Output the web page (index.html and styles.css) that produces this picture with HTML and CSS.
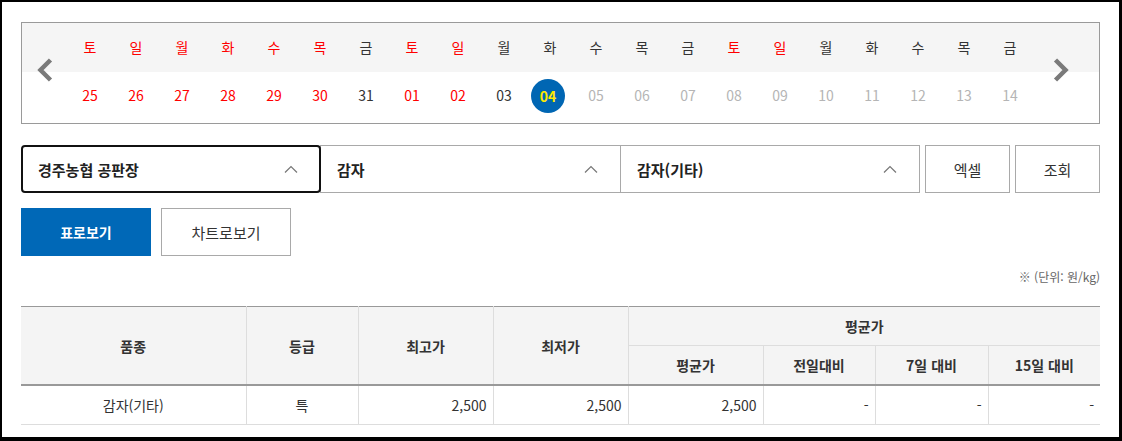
FILE: index.html
```html
<!DOCTYPE html>
<html lang="ko">
<head>
    <meta charset="UTF-8">
    <meta name="viewport" content="width=device-width, initial-scale=1.0">
    <title>공판장 경락가격</title>
    <link rel="stylesheet" href="styles.css">
</head>
<body>

<div class="page">

    <div class="calendar">
        <button class="cal-arrow cal-prev" type="button">
            <svg width="16" height="24" viewBox="0 0 16 24"><polyline points="13.5,2 3.5,12 13.5,22"/></svg>
        </button>

        <ul class="cal-row cal-week">
            <li class="red">토</li><li class="red">일</li><li class="red">월</li><li class="red">화</li>
            <li class="red">수</li><li class="red">목</li><li>금</li><li class="red">토</li>
            <li class="red">일</li><li>월</li><li>화</li><li>수</li><li>목</li><li>금</li>
            <li class="red">토</li><li class="red">일</li><li>월</li><li>화</li><li>수</li><li>목</li><li>금</li>
        </ul>

        <ul class="cal-row cal-dates">
            <li class="red">25</li><li class="red">26</li><li class="red">27</li><li class="red">28</li>
            <li class="red">29</li><li class="red">30</li><li>31</li><li class="red">01</li>
            <li class="red">02</li><li>03</li><li class="on"><span>04</span></li>
            <li class="off">05</li><li class="off">06</li><li class="off">07</li><li class="off">08</li>
            <li class="off">09</li><li class="off">10</li><li class="off">11</li><li class="off">12</li>
            <li class="off">13</li><li class="off">14</li>
        </ul>

        <button class="cal-arrow cal-next" type="button">
            <svg width="16" height="24" viewBox="0 0 16 24"><polyline points="2.5,2 12.5,12 2.5,22"/></svg>
        </button>
    </div>

    <div class="search">
        <div class="select active">
            <span>경주농협 공판장</span>
            <svg width="14" height="8" viewBox="0 0 14 8"><polyline points="1,7.5 7,1.5 13,7.5"/></svg>
        </div>
        <div class="select">
            <span>감자</span>
            <svg width="14" height="8" viewBox="0 0 14 8"><polyline points="1,7.5 7,1.5 13,7.5"/></svg>
        </div>
        <div class="select">
            <span>감자(기타)</span>
            <svg width="14" height="8" viewBox="0 0 14 8"><polyline points="1,7.5 7,1.5 13,7.5"/></svg>
        </div>
        <button class="btn" type="button">엑셀</button>
        <button class="btn" type="button">조회</button>
    </div>

    <div class="view-tabs">
        <button class="tab on" type="button">표로보기</button>
        <button class="tab" type="button">차트로보기</button>
    </div>

    <p class="unit">※ (단위: 원/kg)</p>

    <table class="price">
        <colgroup>
            <col style="width:225px"><col style="width:112px"><col style="width:135px"><col style="width:135px">
            <col style="width:135px"><col style="width:112px"><col style="width:113px"><col style="width:112px">
        </colgroup>
        <thead>
            <tr>
                <th rowspan="2">품종</th>
                <th rowspan="2">등급</th>
                <th rowspan="2">최고가</th>
                <th rowspan="2">최저가</th>
                <th colspan="4">평균가</th>
            </tr>
            <tr>
                <th>평균가</th>
                <th>전일대비</th>
                <th>7일 대비</th>
                <th>15일 대비</th>
            </tr>
        </thead>
        <tbody>
            <tr>
                <td class="center">감자(기타)</td>
                <td class="center">특</td>
                <td>2,500</td>
                <td>2,500</td>
                <td>2,500</td>
                <td>-</td>
                <td>-</td>
                <td>-</td>
            </tr>
        </tbody>
    </table>

</div>

</body>
</html>
```

FILE: styles.css
```css
html {
    background: #000;
}

body {
    margin: 2px 3px 4px 2px;
    height: 435px;
    overflow: hidden;
    background: #fff;
    font-family: "Noto Sans CJK KR", "Noto Sans", sans-serif;
    color: #333;
}

.page {
    padding: 20px 19px 0 19px;
}

ul {
    margin: 0;
    padding: 0;
    list-style: none;
}

button {
    font-family: inherit;
    cursor: pointer;
}

/* 날짜 슬라이더 */
.calendar {
    position: relative;
    border: 1px solid #9a9a9a;
}

.cal-row {
    display: grid;
    grid-template-columns: repeat(21, 46px);
    padding: 0 66px 0 45px;
}

.cal-row li {
    text-align: center;
    font-size: 14px;
    color: #333;
}

.cal-week {
    height: 49px;
    background: #f5f5f5;
    line-height: 48px;
}

.cal-dates {
    height: 51px;
    line-height: 47px;
}

.cal-row li.red {
    color: #ff0000;
}

.cal-row li.off {
    color: #b5b5b5;
}

.cal-dates li.on {
    display: flex;
    justify-content: center;
    align-items: center;
}

.cal-dates li.on span {
    width: 34px;
    height: 34px;
    margin-top: -4px;
    margin-left: -4px;
    border-radius: 50%;
    background: #0066b3;
    color: #ffea00;
    font-weight: bold;
    line-height: 34px;
}

.cal-arrow {
    position: absolute;
    top: 35px;
    padding: 0;
    border: 0;
    background: none;
    line-height: 0;
}

.cal-arrow svg polyline {
    fill: none;
    stroke: #7a7a7a;
    stroke-width: 4.5;
}

.cal-prev {
    left: 15px;
}

.cal-next {
    right: 30px;
}

/* 검색 */
.search {
    display: flex;
    margin-top: 21px;
    height: 48px;
}

.select {
    display: flex;
    align-items: center;
    justify-content: space-between;
    box-sizing: border-box;
    width: 301px;
    margin-left: -1px;
    padding: 0 22px 0 16px;
    border: 1px solid #a9a9a9;
    font-size: 15px;
    font-weight: bold;
    color: #222;
}

.select:first-child {
    width: 300px;
    margin-left: 0;
}

.select.active {
    position: relative;
    z-index: 1;
    border: 2px solid #111;
    border-radius: 4px;
    padding-left: 15px;
    padding-right: 21px;
}

.select:nth-child(3) {
    width: 300px;
}

.select svg polyline {
    fill: none;
    stroke: #777;
    stroke-width: 1.2;
}

.btn {
    width: 85px;
    margin-left: 5px;
    border: 1px solid #a9a9a9;
    background: #fff;
    font-size: 15px;
    color: #333;
}

/* 보기 탭 */
.view-tabs {
    display: flex;
    gap: 10px;
    margin-top: 15px;
}

.tab {
    width: 130px;
    height: 48px;
    border: 1px solid #a9a9a9;
    background: #fff;
    font-size: 15px;
    color: #333;
}

.tab.on {
    border-color: #0068b7;
    background: #0068b7;
    color: #fff;
    font-size: 14px;
    font-weight: bold;
}

.unit {
    margin: 12px 0 0;
    text-align: right;
    font-size: 12px;
    line-height: 18px;
    color: #666;
}

/* 가격표 */
.price {
    width: 100%;
    margin-top: 20px;
    border-collapse: collapse;
    table-layout: fixed;
    border-top: 1px solid #999;
    font-size: 14px;
}

.price th {
    height: 38px;
    padding: 0;
    background: #f4f4f4;
    border-left: 1px solid #ddd;
    border-bottom: 1px solid #ddd;
    font-weight: bold;
    color: #333;
}

.price thead tr:last-child th,
.price th[rowspan] {
    border-bottom: 2px solid #999;
}

.price td {
    height: 38px;
    padding: 0 6px;
    border-left: 1px solid #ddd;
    border-bottom: 1px solid #ddd;
    text-align: right;
    color: #333;
}

.price tr > :first-child {
    border-left: 0;
}

.price thead tr:last-child th:first-child {
    border-left: 1px solid #ddd;
}

.price td.center {
    text-align: center;
}
```
